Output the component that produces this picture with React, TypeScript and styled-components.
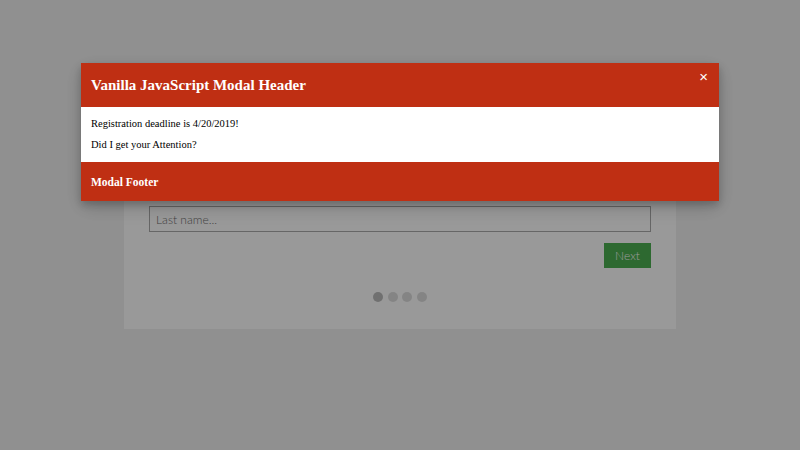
import React from 'react';
import styled, { createGlobalStyle } from 'styled-components';

const GlobalStyle = createGlobalStyle`
  html, body {
    margin: 0;
    padding: 0;
    background: #f1f1f1;
    font-family: 'Lato', 'Liberation Sans', sans-serif;
  }
`;

const Page = styled.div`
  height: 450px;
  padding-top: 100px;
  box-sizing: border-box;
  overflow: hidden;
`;

const Form = styled.form`
  width: 552px;
  box-sizing: border-box;
  margin: 0 auto;
  padding: 25px 25px 27px;
  background: #ffffff;
`;

const Title = styled.h1`
  margin: 0 0 10px;
  height: 35px;
  font-size: 22px;
  font-weight: normal;
  text-align: center;
`;

const Field = styled.input`
  display: block;
  width: 100%;
  box-sizing: border-box;
  height: 26px;
  margin-bottom: 10px;
  padding: 0 6px;
  border: 1px solid #aaaaaa;
  font-family: 'Lato', 'Liberation Sans', sans-serif;
  font-size: 12px;
  font-weight: 300;
  background: #ffffff;

  &::placeholder {
    color: #6e6e6e;
  }
`;

const ButtonRow = styled.div`
  display: flex;
  justify-content: flex-end;
  margin-top: 11px;
`;

const NextButton = styled.button`
  width: 47px;
  height: 25px;
  border: none;
  background: #4caf50;
  color: #ffffff;
  font-family: 'Lato', 'Liberation Sans', sans-serif;
  font-size: 12px;
  font-weight: 300;
  padding: 0;
`;

const Steps = styled.div`
  display: flex;
  justify-content: center;
  margin-top: 24px;
`;

const Step = styled.span<{ active?: boolean }>`
  width: 10px;
  height: 10px;
  margin: 0 2.25px;
  border-radius: 50%;
  background: #bbbbbb;
  opacity: ${p => (p.active ? 1 : 0.5)};
`;

const Backdrop = styled.div`
  position: fixed;
  inset: 0;
  background: rgba(0, 0, 0, 0.4);
`;

const Modal = styled.div`
  width: 638px;
  margin: 63px auto 0;
  box-shadow: 0 4px 8px rgba(0, 0, 0, 0.2), 0 6px 20px rgba(0, 0, 0, 0.19);
  font-family: 'Liberation Serif', 'Times New Roman', serif;
`;

const ModalHeader = styled.div`
  display: flex;
  align-items: center;
  height: 44px;
  padding: 1px 11px 0 10px;
  box-sizing: border-box;
  background: #bf2f13;
  color: #ffffff;
  position: relative;
`;

const HeaderTitle = styled.h2`
  margin: 0;
  font-size: 15px;
  font-weight: bold;
`;

const Close = styled.span`
  position: absolute;
  top: 4px;
  right: 11px;
  font-family: 'Liberation Sans', sans-serif;
  font-size: 15px;
  line-height: 20px;
  color: #ffffff;
`;

const ModalBody = styled.div`
  display: flex;
  flex-direction: column;
  gap: 7px;
  padding: 10px 10px;
  background: #ffffff;
  color: #000000;
`;

const BodyText = styled.p`
  margin: 0;
  font-size: 10.5px;
  line-height: 14px;
`;

const ModalFooter = styled.div`
  display: flex;
  align-items: center;
  height: 39px;
  padding: 0 10px;
  background: #bf2f13;
  color: #ffffff;
`;

const FooterTitle = styled.h3`
  margin: 0;
  font-size: 11.5px;
  font-weight: bold;
`;

export default function App() {
  return (
    <Page>
      <GlobalStyle />
      <Form onSubmit={e => e.preventDefault()}>
        <Title>Register:</Title>
        <Field placeholder="First name..." />
        <Field placeholder="Last name..." />
        <ButtonRow>
          <NextButton type="button">Next</NextButton>
        </ButtonRow>
        <Steps>
          <Step active />
          <Step />
          <Step />
          <Step />
        </Steps>
      </Form>
      <Backdrop>
        <Modal>
          <ModalHeader>
            <HeaderTitle>Vanilla JavaScript Modal Header</HeaderTitle>
            <Close>×</Close>
          </ModalHeader>
          <ModalBody>
            <BodyText>Registration deadline is 4/20/2019!</BodyText>
            <BodyText>Did I get your Attention?</BodyText>
          </ModalBody>
          <ModalFooter>
            <FooterTitle>Modal Footer</FooterTitle>
          </ModalFooter>
        </Modal>
      </Backdrop>
    </Page>
  );
}
